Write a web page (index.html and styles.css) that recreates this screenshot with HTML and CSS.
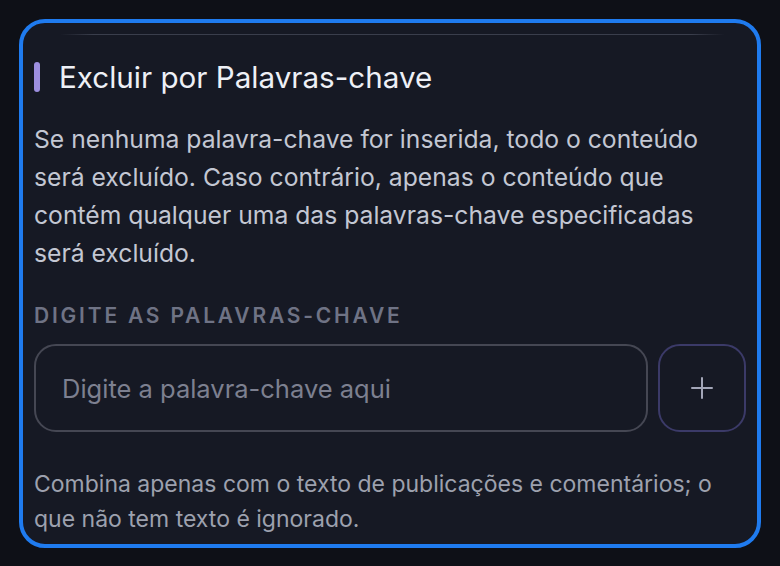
FILE: index.html
```html
<!DOCTYPE html>
<html lang="pt">
<head>
<meta charset="utf-8">
<title>Excluir por Palavras-chave</title>
<link rel="stylesheet" href="styles.css">
</head>
<body>
<section class="panel">
  <div class="divider"></div>
  <div class="heading">
    <span class="bar"></span>
    <h2 class="title">Excluir por Palavras-chave</h2>
  </div>
  <p class="desc">Se nenhuma palavra-chave for inserida, todo o conteúdo será excluído. Caso contrário, apenas o conteúdo que contém qualquer uma das palavras-chave especificadas será excluído.</p>
  <label class="label" for="kw">DIGITE AS PALAVRAS-CHAVE</label>
  <div class="entry">
    <input id="kw" class="input" type="text" placeholder="Digite a palavra-chave aqui">
    <button class="add" type="button" aria-label="Adicionar">
      <svg width="22" height="22" viewBox="0 0 22 22" fill="none" stroke="currentColor" stroke-width="2" stroke-linecap="round"><path d="M11 1v20M1 11h20"/></svg>
    </button>
  </div>
  <p class="note">Combina apenas com o texto de publicações e comentários; o que não tem texto é ignorado.</p>
</section>
</body>
</html>
```

FILE: styles.css
```css
* { box-sizing: border-box; }
html, body { margin: 0; padding: 0; }
body {
  background: #0e1017;
  font-family: Inter, "Noto Sans", sans-serif;
  width: 780px;
  height: 566px;
  overflow: hidden;
}
.panel {
  margin: 19px;
  width: 742px;
  height: 529px;
  border: 4px solid #1f7bef;
  border-radius: 26px;
  background: #161924;
  padding: 11px 10px 0 11px;
  overflow: hidden;
}
.divider {
  height: 1px;
  margin: 0 22px 0 26px;
  background: linear-gradient(90deg, rgba(58,62,76,0) 0%, #3a3e4c 5%, #3a3e4c 95%, rgba(58,62,76,0) 100%);
}
.heading {
  display: flex;
  align-items: center;
  gap: 19px;
  margin-top: 27px;
  height: 30px;
}
.bar {
  width: 6px;
  height: 30px;
  border-radius: 3px;
  background: #9d8fe0;
  flex: none;
}
.title {
  margin: 0;
  font-size: 29.6px;
  font-weight: 400;
  line-height: 36px;
  color: #eef0f6;
}
.desc {
  margin: 28px 0 0;
  padding-right: 20px;
  font-size: 24.7px;
  line-height: 38px;
  color: #c3c7d3;
}
.label {
  display: block;
  margin-top: 32px;
  font-size: 21px;
  line-height: 24px;
  font-weight: 600;
  letter-spacing: 2.8px;
  color: #6f7385;
}
.entry {
  display: flex;
  gap: 10px;
  margin-top: 16px;
}
.input {
  width: 614px;
  height: 88px;
  border: 2px solid #454753;
  border-radius: 22px;
  background: transparent;
  padding: 0 26px;
  font-family: inherit;
  font-size: 25.5px;
  color: #c3c7d3;
  outline: none;
}
.input::placeholder { color: #7d8090; }
.add {
  width: 88px;
  height: 88px;
  flex: none;
  border: 2px solid #3b3a68;
  border-radius: 22px;
  background: transparent;
  color: #a3a6b8;
  display: flex;
  align-items: center;
  justify-content: center;
  padding: 0;
}
.note {
  margin: 35px 0 0;
  font-size: 23px;
  line-height: 35px;
  color: #9da1ae;
}
```
